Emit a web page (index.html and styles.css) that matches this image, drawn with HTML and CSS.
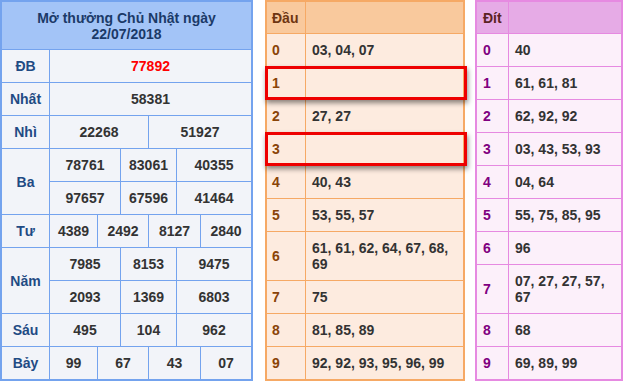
FILE: index.html
```html
<!DOCTYPE html>
<html lang="vi">
<head>
<meta charset="utf-8">
<title>Kết quả xổ số</title>
<link rel="stylesheet" href="styles.css">
</head>
<body>
<div class="page">
  <div class="kq">
    <div class="kq-head">Mở thưởng Chủ Nhật ngày<br>22/07/2018</div>

    <div class="lbl">ĐB</div>
    <div class="num all db">77892</div>

    <div class="lbl">Nhất</div>
    <div class="num all">58381</div>

    <div class="lbl">Nhì</div>
    <div class="num h1">22268</div>
    <div class="num h2">51927</div>

    <div class="lbl two">Ba</div>
    <div class="num t1">78761</div>
    <div class="num t2">83061</div>
    <div class="num t3">40355</div>
    <div class="num t1">97657</div>
    <div class="num t2">67596</div>
    <div class="num t3">41464</div>

    <div class="lbl">Tư</div>
    <div class="num q1">4389</div>
    <div class="num q2">2492</div>
    <div class="num q3">8127</div>
    <div class="num q4">2840</div>

    <div class="lbl two">Năm</div>
    <div class="num t1">7985</div>
    <div class="num t2">8153</div>
    <div class="num t3">9475</div>
    <div class="num t1">2093</div>
    <div class="num t2">1369</div>
    <div class="num t3">6803</div>

    <div class="lbl">Sáu</div>
    <div class="num t1">495</div>
    <div class="num t2">104</div>
    <div class="num t3">962</div>

    <div class="lbl">Bảy</div>
    <div class="num q1">99</div>
    <div class="num q2">67</div>
    <div class="num q3">43</div>
    <div class="num q4">07</div>
  </div>

  <div class="lt-wrap dau-wrap">
    <div class="lt dau">
      <div class="lt-h key">Đầu</div><div class="lt-h"></div>
      <div class="k">0</div><div class="v">03, 04, 07</div>
      <div class="k">1</div><div class="v"></div>
      <div class="k">2</div><div class="v">27, 27</div>
      <div class="k">3</div><div class="v"></div>
      <div class="k">4</div><div class="v">40, 43</div>
      <div class="k">5</div><div class="v">53, 55, 57</div>
      <div class="k">6</div><div class="v">61, 61, 62, 64, 67, 68, 69</div>
      <div class="k">7</div><div class="v">75</div>
      <div class="k">8</div><div class="v">81, 85, 89</div>
      <div class="k">9</div><div class="v">92, 92, 93, 95, 96, 99</div>
    </div>
    <div class="mark mark-1"></div>
    <div class="mark mark-3"></div>
  </div>

  <div class="lt-wrap dit-wrap">
    <div class="lt dit">
      <div class="lt-h key">Đít</div><div class="lt-h"></div>
      <div class="k">0</div><div class="v">40</div>
      <div class="k">1</div><div class="v">61, 61, 81</div>
      <div class="k">2</div><div class="v">62, 92, 92</div>
      <div class="k">3</div><div class="v">03, 43, 53, 93</div>
      <div class="k">4</div><div class="v">04, 64</div>
      <div class="k">5</div><div class="v">55, 75, 85, 95</div>
      <div class="k">6</div><div class="v">96</div>
      <div class="k">7</div><div class="v">07, 27, 27, 57, 67</div>
      <div class="k">8</div><div class="v">68</div>
      <div class="k">9</div><div class="v">69, 89, 99</div>
    </div>
  </div>
</div>
</body>
</html>
```

FILE: styles.css
```css
* { box-sizing: border-box; }

html, body {
  margin: 0;
  padding: 0;
  background: #ffffff;
}

body {
  font-family: "Liberation Sans", Arial, sans-serif;
  font-size: 14px;
  font-weight: bold;
  color: #333333;
}

.page {
  display: flex;
  align-items: flex-start;
  width: 624px;
  height: 381px;
}

/* ---------- left results table ---------- */
.kq {
  display: grid;
  grid-template-columns: 47px 47px 22px 27px 27px 23px 50px;
  grid-template-rows: 47px repeat(10, 32px);
  gap: 1px;
  padding: 2px;
  background: #74a3ee;
  width: 253px;
}

.kq > div {
  background: #f2f4f9;
  display: flex;
  align-items: center;
  justify-content: center;
  line-height: 16px;
  text-align: center;
}

.kq .kq-head {
  grid-column: 1 / -1;
  background: #a3c4f7;
  color: #1b3a68;
}

.kq .lbl {
  grid-column: 1;
  color: #1f4b84;
}

.kq .lbl.two { grid-row: span 2; }

.kq .all { grid-column: 2 / 8; }
.kq .db { color: #ff0000; }

.kq .h1 { grid-column: 2 / 5; }
.kq .h2 { grid-column: 5 / 8; }

.kq .t1 { grid-column: 2 / 4; }
.kq .t2 { grid-column: 4 / 6; }
.kq .t3 { grid-column: 6 / 8; }

.kq .q1 { grid-column: 2 / 3; }
.kq .q2 { grid-column: 3 / 5; }
.kq .q3 { grid-column: 5 / 7; }
.kq .q4 { grid-column: 7 / 8; }

/* ---------- loto tables ---------- */
.lt-wrap {
  position: relative;
}

.dau-wrap { margin-left: 12px; }
.dit-wrap { margin-left: 10px; }

.lt {
  display: grid;
  grid-template-rows: 31px;
  grid-auto-rows: auto;
  gap: 1px;
  padding: 2px;
}

.lt > div {
  display: flex;
  align-items: center;
  min-height: 32px;
  padding: 8px 6px;
  line-height: 16px;
}

.lt > .lt-h {
  min-height: 0;
  padding: 0 6px;
}

.dau {
  width: 200px;
  grid-template-columns: 38px 157px;
  background: #f6a965;
}

.dau > div { background: #fdebdf; }
.dau > .lt-h { background: #f9c99d; }
.dau > .key { color: #6e3512; padding-left: 5px; }
.dau > .k { color: #8a4408; padding-left: 5px; }

.dit {
  width: 148px;
  grid-template-columns: 31px 112px;
  background: #e68ae1;
}

.dit > div { background: #fcf0fa; }
.dit > .lt-h { background: #e6abe6; }
.dit > .key { color: #5b2323; }
.dit > .k { color: #800080; }

/* red highlight boxes over empty rows */
.mark {
  position: absolute;
  left: 0;
  width: 202px;
  height: 34px;
  border: 3px solid #ee0000;
  box-shadow: 1px 3px 5px rgba(0, 0, 0, 0.45);
  pointer-events: none;
}

.mark-1 { top: 66px; }
.mark-3 { top: 132px; }
```
